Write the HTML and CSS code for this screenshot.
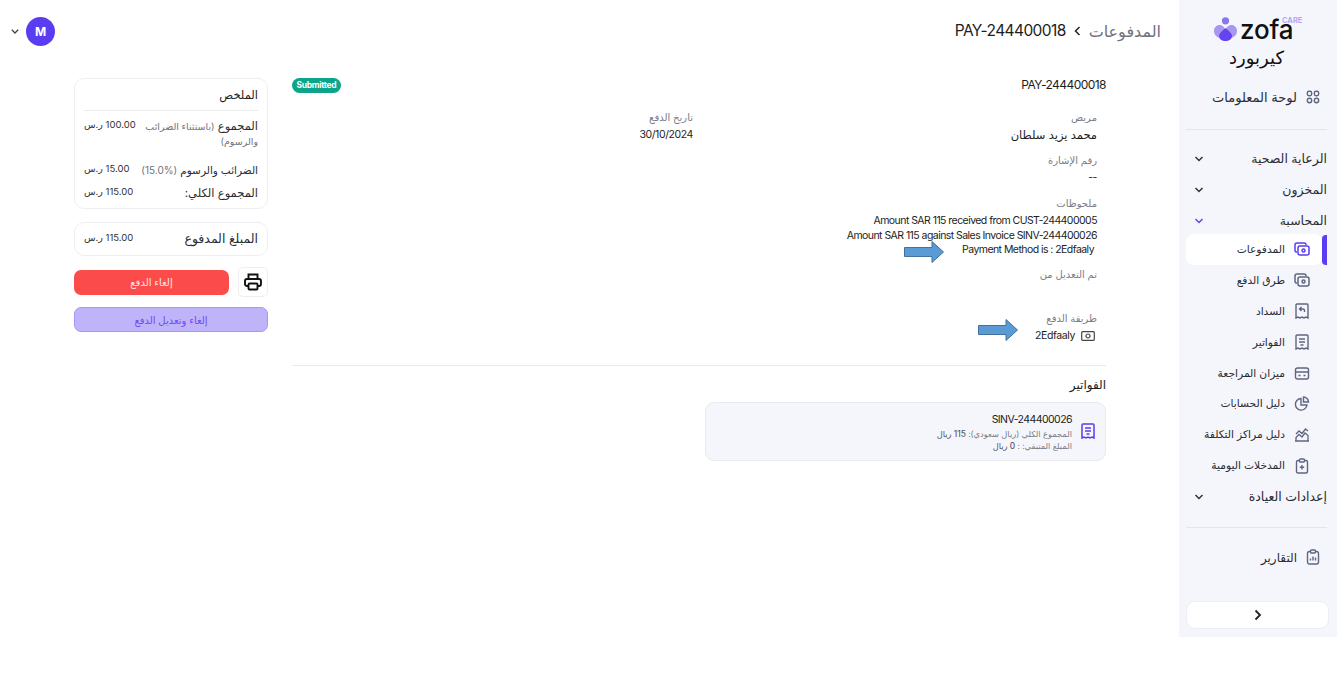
FILE: index.html
```html
<!DOCTYPE html>
<html lang="ar" dir="rtl">
<head>
<meta charset="utf-8">
<title>PAY-244400018</title>
<link rel="stylesheet" href="styles.css">
</head>
<body>
<div class="app">
  <aside class="sidebar">
    <div class="logo" dir="ltr">
      <svg class="logo-mark" width="23" height="24" viewBox="0 0 23 24"><circle cx="11.500" cy="3.800" r="3.600" fill="#8b74ee"/><path d="M5.500 8C8.500 8 11 10.500 11 13C8 15 6 18 5.500 21C2.500 20 0 17.500 0 14C0 10.500 2.500 8 5.500 8Z" fill="#a897f2"/><path d="M17.500 8C14.500 8 12 10.500 12 13C15 15 17 18 17.500 21C20.500 20 23 17.500 23 14C23 10.500 20.500 8 17.500 8Z" fill="#a897f2"/><path d="M11.500 11C14.500 14 18 16 18 19C18 22 15 24 11.500 24C8 24 5 22 5 19C5 16 8.500 14 11.500 11Z" fill="#6543f0"/></svg>
      <span class="logo-word">zofa</span>
      <span class="logo-care">CARE</span>
    </div>
    <div class="brand-name">كيربورد</div>
    <a class="top-link"><svg class="ic" width="14" height="14" viewBox="0 0 16 16" fill="none" stroke="#5f6580" stroke-width="1.600"><rect x="1.500" y="1.500" width="5" height="5" rx="2"/><rect x="9.500" y="1.500" width="5" height="5" rx="2"/><rect x="1.500" y="9.500" width="5" height="5" rx="2.500"/><rect x="9.500" y="9.500" width="5" height="5" rx="2.500"/></svg><span>لوحة المعلومات</span></a>
    <hr class="side-rule">
    <div class="group"><span>الرعاية الصحية</span><svg class="chev" width="10" height="6" viewBox="0 0 10 6" fill="none" stroke="#333" stroke-width="1.500"><path d="M1.500 1l3.500 3.500L8.500 1"/></svg></div>
    <div class="group"><span>المخزون</span><svg class="chev" width="10" height="6" viewBox="0 0 10 6" fill="none" stroke="#333" stroke-width="1.500"><path d="M1.500 1l3.500 3.500L8.500 1"/></svg></div>
    <div class="group"><span>المحاسبة</span><svg class="chev" width="10" height="6" viewBox="0 0 10 6" fill="none" stroke="#6543f0" stroke-width="1.500"><path d="M1.500 1l3.500 3.500L8.500 1"/></svg></div>
    <nav class="subnav">
      <a class="sub active"><svg width="16" height="14" viewBox="0 0 16 14" fill="none" stroke="#5a3df0" stroke-width="1.500"><path d="M3 10H2.500A1.500 1.500 0 0 1 1 8.500V3A2 2 0 0 1 3 1h7a2 2 0 0 1 2 2"/><rect x="4" y="4" width="11" height="9" rx="2"/><circle cx="9.500" cy="8.500" r="1.500"/></svg><span>المدفوعات</span></a>
      <a class="sub"><svg width="16" height="14" viewBox="0 0 16 14" fill="none" stroke="#5f6580" stroke-width="1.500"><path d="M3 10H2.500A1.500 1.500 0 0 1 1 8.500V3A2 2 0 0 1 3 1h7a2 2 0 0 1 2 2"/><rect x="4" y="4" width="11" height="9" rx="2"/><circle cx="9.500" cy="8.500" r="1.500"/></svg><span>طرق الدفع</span></a>
      <a class="sub"><svg width="14" height="16" viewBox="0 0 14 16" fill="none" stroke="#5f6580" stroke-width="1.400"><path d="M2 1h10a1 1 0 0 1 1 1v13l-2-1-2 1-2-1-2 1-2-1-2 1V2a1 1 0 0 1 1-1Z"/><path d="M9.500 9V7.500a1.500 1.500 0 0 0-1.500-1.500H5M6.500 4L4.500 6l2 2"/></svg><span>السداد</span></a>
      <a class="sub"><svg width="14" height="16" viewBox="0 0 14 16" fill="none" stroke="#5f6580" stroke-width="1.400"><path d="M2 1h10a1 1 0 0 1 1 1v13l-2-1-2 1-2-1-2 1-2-1-2 1V2a1 1 0 0 1 1-1Z"/><path d="M4 5h6M4 8h6M5.500 11h3"/></svg><span>الفواتير</span></a>
      <a class="sub"><svg width="15" height="13" viewBox="0 0 15 13" fill="none" stroke="#5f6580" stroke-width="1.400"><rect x="1" y="1" width="13" height="11" rx="2"/><path d="M1 5h13M4 8.500h2M9 8.500h2"/></svg><span>ميزان المراجعة</span></a>
      <a class="sub"><svg width="15" height="15" viewBox="0 0 15 15" fill="none" stroke="#5f6580" stroke-width="1.400"><path d="M6.500 2.500a5.800 5.800 0 1 0 6 6.500h-6Z"/><path d="M9 1a5 5 0 0 1 5 5H9Z"/></svg><span>دليل الحسابات</span></a>
      <a class="sub"><svg width="16" height="14" viewBox="0 0 16 14" fill="none" stroke="#5f6580" stroke-width="1.300"><path d="M1 13h14M2 9.500l3-3 3 2.500 3-4 3 2.500V13H2Z"/><path d="M2 6l3-3 3 2.500L11.500 1 14 3"/></svg><span>دليل مراكز التكلفة</span></a>
      <a class="sub"><svg width="14" height="16" viewBox="0 0 14 16" fill="none" stroke="#5f6580" stroke-width="1.400"><rect x="1.500" y="2.500" width="11" height="12.500" rx="1.500"/><rect x="4.500" y="1" width="5" height="3" rx="1" fill="#f5f6fb"/><path d="M7 7v4.500M4.800 9.200h4.400"/></svg><span>المدخلات اليومية</span></a>
    </nav>
    <div class="group"><span>إعدادات العيادة</span><svg class="chev" width="10" height="6" viewBox="0 0 10 6" fill="none" stroke="#333" stroke-width="1.500"><path d="M1.500 1l3.500 3.500L8.500 1"/></svg></div>
    <hr class="side-rule second">
    <a class="top-link reports"><svg class="ic" width="14" height="16" viewBox="0 0 14 16" fill="none" stroke="#5f6580" stroke-width="1.400"><rect x="1.500" y="2.500" width="11" height="12.500" rx="2"/><rect x="4.500" y="1" width="5" height="3" rx="1" fill="#f5f6fb"/><path d="M4.500 11.500V9.500M7 11.500V7.500M9.500 11.500V8.500"/></svg><span>التقارير</span></a>
    <button class="collapse" type="button" aria-label="طي"><svg width="8" height="12" viewBox="0 0 8 12" fill="none" stroke="#222" stroke-width="1.800"><path d="M1.500 1.500L6 6l-4.500 4.500"/></svg></button>
  </aside>

  <main class="main">
    <header class="topbar">
      <div class="crumbs">
        <span class="crumb-root">المدفوعات</span>
        <svg width="7" height="10" viewBox="0 0 7 10" fill="none" stroke="#222" stroke-width="1.500"><path d="M5.500 1L1.500 5l4 4"/></svg>
        <span class="crumb-cur">PAY-244400018</span>
      </div>
      <div class="user">
        <div class="avatar">M</div>
        <svg width="8" height="5" viewBox="0 0 8 5" fill="none" stroke="#444" stroke-width="1.300"><path d="M.8.8 4 4 7.200.8"/></svg>
      </div>
    </header>

    <div class="content">
      <section class="details">
        <div class="detail-head">
          <h1>PAY-244400018</h1>
          <span class="badge" dir="ltr">Submitted</span>
        </div>
        <div class="grid">
          <div class="col">
            <div class="field"><div class="label">مريض</div><div class="value name">محمد يزيد سلطان</div></div>
            <div class="field"><div class="label">رقم الإشارة</div><div class="value">--</div></div>
            <div class="field"><div class="label">ملحوظات</div>
              <div class="value notes">Amount SAR 115 received from CUST-244400005<br>Amount SAR 115 against Sales Invoice SINV-244400026<br><span class="trail">Payment Method is : 2Edfaaly</span></div>
            </div>
            <div class="field modified"><div class="label">تم التعديل من</div></div>
            <div class="field method"><div class="label">طريقة الدفع</div>
              <div class="value pay"><svg width="14" height="10" viewBox="0 0 14 10" fill="none" stroke="#444" stroke-width="1.200"><rect x=".7" y=".7" width="12.600" height="8.600" rx="1"/><circle cx="7" cy="5" r="2"/></svg><span>2Edfaaly</span></div>
              <svg class="arrow arrow-b" width="40" height="22" viewBox="0 0 40 22"><path d="M.5 6.500H28V.5L39.500 11 28 21.500V15.500H.5Z" fill="#5b9bd5" stroke="#41719c"/></svg>
            </div>
            <svg class="arrow arrow-a" width="40" height="22" viewBox="0 0 40 22"><path d="M.5 6.500H28V.5L39.500 11 28 21.500V15.500H.5Z" fill="#5b9bd5" stroke="#41719c"/></svg>
          </div>
          <div class="col">
            <div class="field"><div class="label">تاريخ الدفع</div><div class="value">30/10/2024</div></div>
          </div>
        </div>
        <hr class="rule">
        <h2>الفواتير</h2>
        <div class="invoice">
          <svg width="14" height="16" viewBox="0 0 14 16" fill="none" stroke="#5a3df0" stroke-width="1.500"><path d="M2 1h10a1 1 0 0 1 1 1v13l-2-1-2 1-2-1-2 1-2-1-2 1V2a1 1 0 0 1 1-1Z"/><path d="M4 5h6M4 8h6M5.500 11h3"/></svg>
          <div class="inv-text">
            <div class="inv-id">SINV-244400026</div>
            <div class="inv-line">المجموع الكلي (ريال سعودي): <b>115 ريال</b></div>
            <div class="inv-line">المبلغ المتبقي: : <b>0 ريال</b></div>
          </div>
        </div>
      </section>

      <aside class="summary">
        <div class="card sum-card">
          <div class="sum-title">الملخص</div>
          <div class="sum-row first"><div class="sum-label">المجموع <small>(باستثناء الضرائب والرسوم)</small></div><div class="amt">100.00 ر.س</div></div>
          <div class="sum-row second"><div class="sum-label">الضرائب والرسوم <small><bdi dir="ltr">(15.0%)</bdi></small></div><div class="amt">15.00 ر.س</div></div>
          <div class="sum-row third"><div class="sum-label">المجموع الكلي:</div><div class="amt">115.00 ر.س</div></div>
        </div>
        <div class="card paid"><div class="sum-label">المبلغ المدفوع</div><div class="amt">115.00 ر.س</div></div>
        <div class="actions">
          <button class="print" type="button" aria-label="طباعة"><svg width="18" height="18" viewBox="0 0 18 18" fill="none" stroke="#111" stroke-width="1.900"><path d="M4.500 6V1.500h9V6"/><path d="M4.500 13H3a2 2 0 0 1-2-2V8a2 2 0 0 1 2-2h12a2 2 0 0 1 2 2v3a2 2 0 0 1-2 2h-1.500"/><rect x="4.500" y="10.500" width="9" height="6" rx="1"/></svg></button>
          <button class="btn red" type="button">إلغاء الدفع</button>
        </div>
        <button class="btn violet" type="button">إلغاء وتعديل الدفع</button>
      </aside>
    </div>
  </main>
</div>
</body>
</html>
```
FILE: styles.css
```css
* { box-sizing: border-box; }
html, body { margin: 0; height: 678px; overflow: hidden; background: #fff; }
body { font-family: Inter, "DejaVu Sans", sans-serif; color: #1f2024; }
.app { display: flex; align-items: flex-start; height: 678px; }

/* sidebar */
.sidebar { flex: 0 0 158px; height: 637px; background: #f5f6fb; padding: 0 10px 0 7px; display: flex; flex-direction: column; position: relative; }
.logo { display: flex; align-items: center; height: 26px; margin-top: 16px; position: relative; gap: 3px; padding-left: 28px; }
.logo-word { font-weight: 500; font-size: 26px; line-height: 8px; margin-top: 2px; color: #111; letter-spacing: -.2px; }
.logo-care { position: absolute; top: 1px; left: 96px; font-size: 7.500px; line-height: 8px; font-weight: 700; color: #b6a8f5; }
.brand-name { text-align: center; font-size: 18px; line-height: 24px; color: #111; margin: 4px 0 0; }
.top-link { display: flex; align-items: center; gap: 9px; height: 20px; margin-top: 17px; padding-right: 7px; font-size: 13px; color: #2b2c33; }
.side-rule { border: 0; border-top: 1px solid #e3e5ec; width: 141px; margin: 22px 0 0; }
.group { display: flex; justify-content: space-between; align-items: center; height: 31px; font-size: 12.500px; color: #2b2c33; padding-left: 8px; }
.side-rule + .group { margin-top: 13px; }
.chev { flex: none; }
.subnav { display: flex; flex-direction: column; margin-top: -2px; }
.sub { display: flex; align-items: center; gap: 8px; height: 30.900px; width: 136px; margin-right: 5px; padding-right: 11px; font-size: 10.700px; color: #2b2c33; border-radius: 8px; position: relative; }
.sub svg { flex: 0 0 18px; }
.sub.active { background: #fff; }
.sub.active::before { content: ""; position: absolute; top: 1px; bottom: 0; right: -5px; width: 5px; background: #5a3df0; border-radius: 4px 0 0 4px; }
.side-rule.second { margin-top: 15px; }
.reports { margin-top: 19px; font-size: 12px; }
.collapse { position: absolute; left: 7px; top: 601px; width: 143px; height: 28px; background: #fff; border: 1px solid #eceef4; border-radius: 9px; display: flex; align-items: center; justify-content: center; padding: 0; }

/* main */
.main { flex: 1; min-width: 0; }
.topbar { display: flex; justify-content: space-between; align-items: center; height: 62px; padding: 0 18px 0 11px; }
.crumbs { display: flex; align-items: center; gap: 8px; margin-top: -1px; }
.crumb-root { font-size: 16px; color: #70727c; }
.crumb-cur { font-size: 15.500px; letter-spacing: -.6px; color: #1c1d21; }
.user { display: flex; align-items: center; gap: 7px; }
.avatar { width: 29px; height: 29px; border-radius: 50%; background: #5a3df0; color: #fff; font-size: 12px; font-weight: 700; display: flex; align-items: center; justify-content: center; }

.content { display: grid; grid-template-columns: minmax(0, 1fr) 194px; column-gap: 24px; padding: 16px 73px 0 74px; }
.details { min-width: 0; }
.summary { min-width: 0; width: 194px; }

.detail-head { display: flex; justify-content: space-between; align-items: flex-start; height: 30px; }
h1 { margin: 0; font-size: 12px; line-height: 14px; font-weight: 400; letter-spacing: -.55px; color: #1c1d21; }
.badge { background: #0ca58a; color: #fff; font-size: 8.500px; font-weight: 700; letter-spacing: -.3px; line-height: 15px; height: 15px; padding: 0 4.500px; border-radius: 8px; }

.grid { display: grid; grid-template-columns: 1fr 1fr; column-gap: 12px; padding: 0 9px; margin-top: 1px; }
.col { position: relative; }
.field { margin-bottom: 8px; }
.label { font-size: 10px; line-height: 16px; color: #7a7d88; }
.value { font-size: 10.500px; letter-spacing: -.4px; line-height: 18px; margin-top: 1px; color: #1c1d21; }
.value.name { font-size: 11.500px; letter-spacing: 0; }
.notes { font-size: 10.500px; letter-spacing: -.55px; line-height: 14.500px; margin-top: 3px; }
.trail { padding-right: 3px; }
.modified { margin-top: 2px; height: 44px; margin-bottom: 0; }
.method { position: relative; margin-top: 0; }
.pay { display: flex; align-items: center; gap: 6px; padding-right: 2px; margin-top: 1px; }
.arrow { position: absolute; }
.arrow-a { top: 132px; left: 199px; }
.arrow-b { top: 9px; left: 273px; }

.rule { border: 0; border-top: 1px solid #e9eaee; margin: 12px 0 0; }
h2 { margin: 10px 0 0; font-size: 12px; line-height: 18px; font-weight: 400; color: #1c1d21; }
.invoice { width: 401px; height: 59px; margin-top: 8px; background: #f5f6fb; border: 1px solid #e8eaf0; border-radius: 9px; display: flex; align-items: center; gap: 9px; padding: 0 10px 0 0; }
.inv-text { padding-top: 1px; }
.inv-id { font-size: 10.500px; letter-spacing: -.55px; line-height: 16px; color: #1c1d21; }
.inv-line { font-size: 8.300px; line-height: 12px; color: #7a7d88; }
.inv-line b { font-weight: 500; color: #55565f; }

.card { border: 1px solid #eeeff2; border-radius: 10px; background: #fff; padding: 0 9px; }
.sum-card { height: 131px; padding-top: 8px; }
.sum-title { font-size: 11.500px; line-height: 16px; padding-bottom: 7px; border-bottom: 1px solid #ececef; }
.sum-row { display: flex; justify-content: space-between; align-items: flex-start; }
.sum-row.first { margin-top: 8px; }
.sum-row.second { margin-top: 14px; }
.sum-row.third { margin-top: 8px; }
.sum-label { font-size: 11.500px; line-height: 14px; color: #2b2c33; width: 120px; }
.sum-row.first small { font-size: 9.500px; }
.sum-row.second .sum-label { width: 130px; font-size: 10.500px; }
.sum-label small { font-size: 10px; color: #70727c; }
.amt { font-size: 9.500px; letter-spacing: -.5px; line-height: 12px; color: #333; white-space: nowrap; }
.paid { display: flex; justify-content: space-between; align-items: center; height: 34px; margin-top: 13px; }
.paid .sum-label { font-size: 12.500px; }
.paid .amt { margin-top: -3px; }
.actions { display: flex; align-items: center; gap: 9px; margin-top: 11px; }
.print { flex: 0 0 30px; height: 30px; padding: 0; background: #fff; border: 1px solid #eeeff2; border-radius: 5px; display: flex; align-items: center; justify-content: center; }
.btn { font-family: inherit; font-size: 10px; border-radius: 7px; width: 100%; display: block; padding: 0; }
.red { flex: 1; min-width: 0; height: 25px; background: #fb4b4b; border: 0; color: #ffe3e3; }
.violet { height: 25px; margin-top: 10px; background: #bfb3fa; border: 1px solid #a896f7; color: #6a4ff0; }
```
